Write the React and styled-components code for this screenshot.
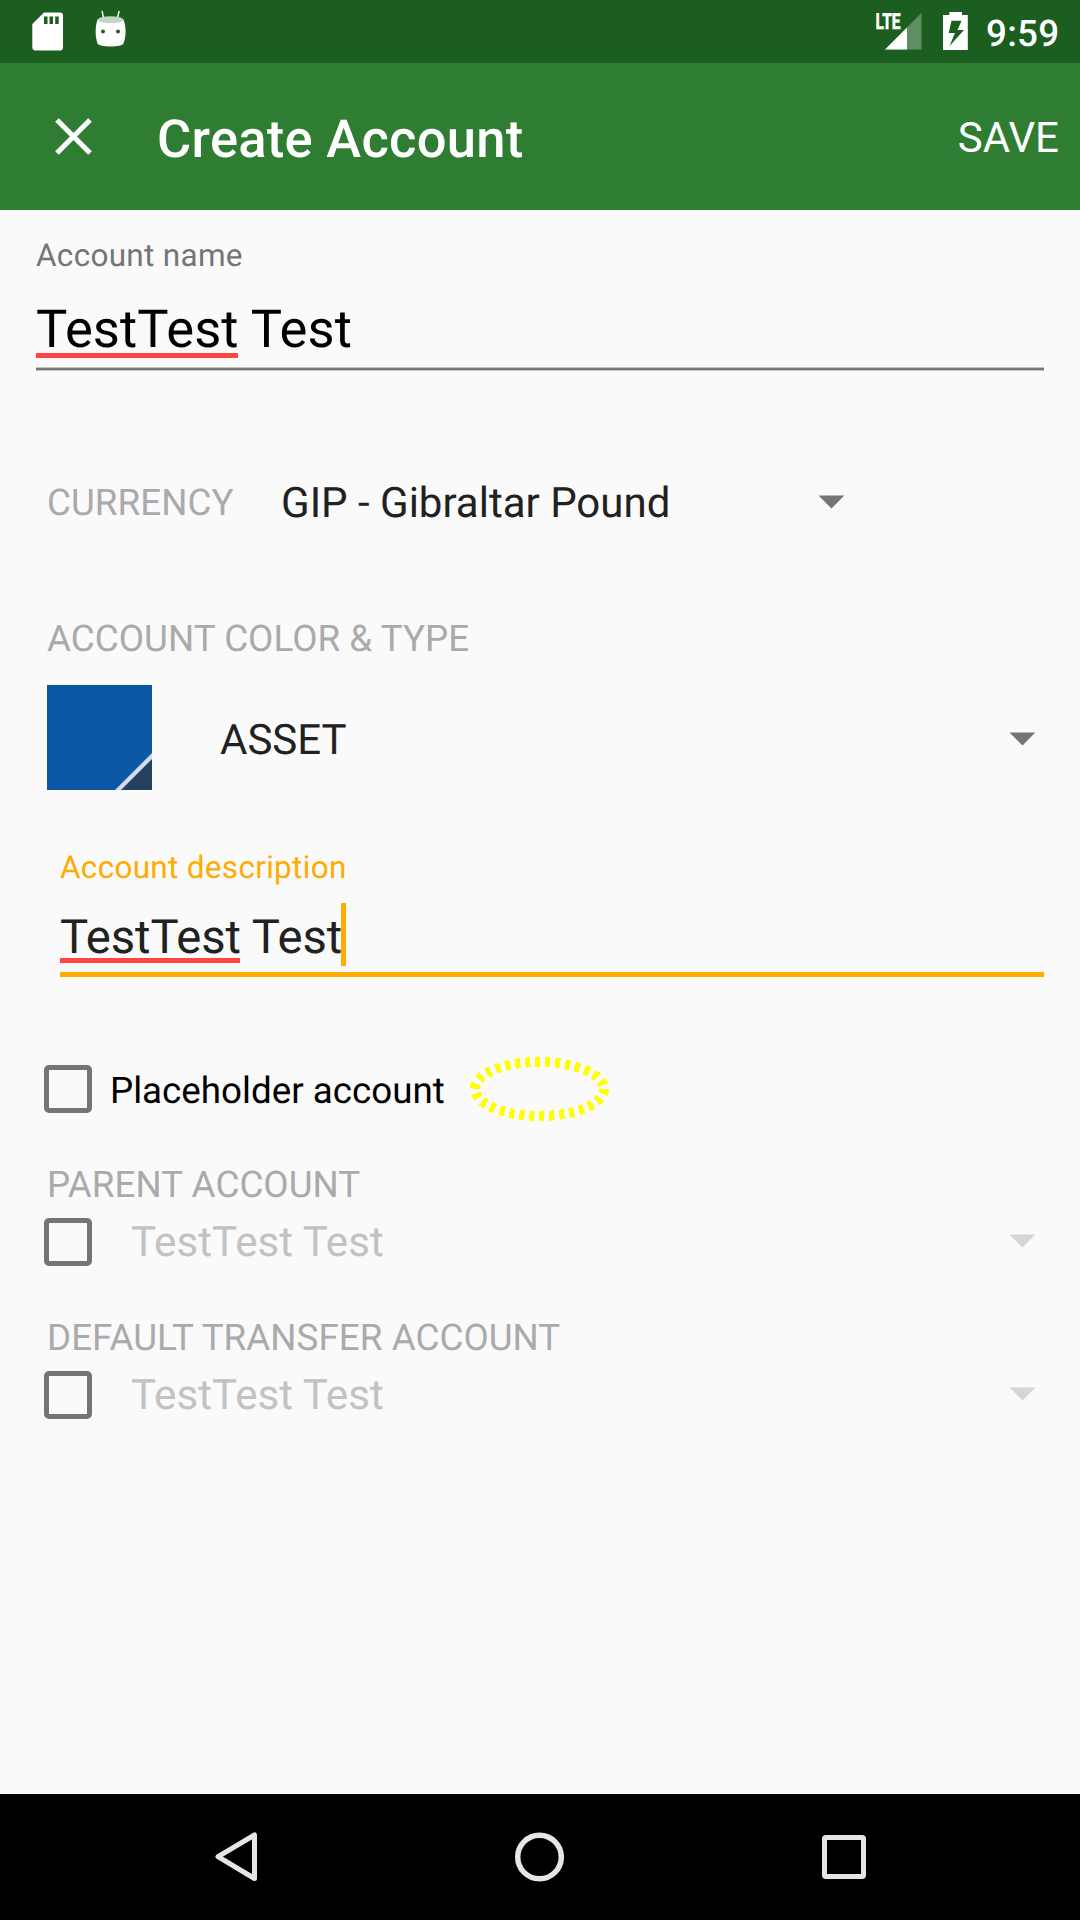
import React from "react";
import styled, { createGlobalStyle } from "styled-components";

const GlobalStyle = createGlobalStyle`
  * { box-sizing: border-box; }
  body { margin: 0; background: #fafafa; }
  svg { display: block; flex: none; }
`;

const Screen = styled.div`
  width: 1080px;
  height: 1920px;
  display: flex;
  flex-direction: column;
  background: #fafafa;
  color: #212121;
  font-family: Roboto, "Noto Sans", sans-serif;
  white-space: nowrap;
  overflow: hidden;
  text-rendering: geometricPrecision;
`;

const StatusBar = styled.header`
  height: 63px;
  flex: none;
  display: flex;
  justify-content: space-between;
  padding: 0 21px 0 32px;
  background: #1b5e20;
  color: #fff;
`;

const StatusGroup = styled.div`
  display: flex;
  gap: ${(p) => p.$gap}px;
`;

const Clock = styled.span`
  width: 73px;
  font-size: 36.75px;
  font-weight: 500;
  line-height: 43px;
  letter-spacing: 0.25px;
  padding-top: 12px;
`;

const Toolbar = styled.div`
  height: 147px;
  flex: none;
  display: flex;
  align-items: center;
  padding: 0 21px 0 55px;
  background: #2e7d32;
  color: #fff;
`;

const Title = styled.h1`
  flex: 1;
  margin: 0 0 0 65px;
  padding-top: 4px;
  font-size: 52.5px;
  font-weight: 500;
  line-height: 62px;
  letter-spacing: 0.27px;
`;

const SaveButton = styled.button`
  border: 0;
  padding: 2px 0 0;
  background: none;
  color: inherit;
  font: 400 42px/50px Roboto, sans-serif;
`;

const Form = styled.main`
  flex: 1;
  display: flex;
  flex-direction: column;
  padding: 27px 36px 0;
`;

const Field = styled.div`
  display: flex;
  flex-direction: column;
  margin: ${(p) => p.$margin || 0};
`;

const FloatingLabel = styled.label`
  font-size: 31.5px;
  line-height: 38px;
  letter-spacing: 0.3px;
  color: ${(p) => (p.$active ? "#ffab00" : "#757575")};
`;

const Value = styled.div`
  display: flex;
  height: ${(p) => p.$height}px;
  line-height: ${(p) => p.$line}px;
  padding-top: ${(p) => p.$top}px;
  font-size: ${(p) => p.$size}px;
  letter-spacing: ${(p) => p.$spacing}px;
  color: ${(p) => p.$color};
  border-bottom: ${(p) => p.$border};
  box-shadow: ${(p) => p.$edge || "none"};
  white-space: pre;
`;

const Misspelled = styled.span`
  position: relative;
  &::after {
    content: "";
    position: absolute;
    left: 0;
    right: 1px;
    top: ${(p) => p.$offset}px;
    height: 5px;
    background: #ff4444;
  }
`;

const Cursor = styled.span`
  width: 5px;
  height: 63px;
  margin: -6px 0 0 -1px;
  background: #ffab00;
`;

const Row = styled.div`
  position: relative;
  display: flex;
  align-items: center;
  height: ${(p) => p.$height}px;
  margin-top: ${(p) => p.$top}px;
  padding-left: ${(p) => p.$left || 0}px;
  padding-right: 8px;
`;

const SectionLabel = styled.div`
  font-size: 36.75px;
  line-height: 44px;
  letter-spacing: 0.05px;
  color: #aaaaaa;
  margin-top: ${(p) => p.$top || 0}px;
  margin-left: ${(p) => p.$left || 0}px;
  padding-top: ${(p) => p.$drop || 0}px;
`;

const SpinnerText = styled.span`
  flex: ${(p) => (p.$width ? "none" : 1)};
  width: ${(p) => (p.$width ? p.$width + "px" : "auto")};
  margin-left: ${(p) => p.$left}px;
  padding-top: ${(p) => p.$drop || 0}px;
  font-size: 42px;
  line-height: 50px;
  letter-spacing: ${(p) => (p.$disabled ? 0.08 : 0)}px;
  color: ${(p) => (p.$disabled ? "#c2c2c2" : "#212121")};
`;

const ArrowIcon = styled.svg`
  margin-top: ${(p) => p.$shift || 0}px;
`;

const Checkbox = styled.span`
  width: 48px;
  height: 48px;
  flex: none;
  border: 5.25px solid #757575;
  border-radius: 5px;
`;

const CheckLabel = styled.span`
  margin-left: 18px;
  padding-top: 4px;
  font-size: 36.75px;
  line-height: 44px;
  color: #000;
`;

const FocusRing = styled.svg`
  position: absolute;
  left: 424px;
  top: -10px;
`;

const NavBar = styled.nav`
  height: 126px;
  flex: none;
  background: #000;
  display: flex;
  align-items: center;
  justify-content: space-between;
  padding: 0 214px 0 214px;
`;

function Arrow({ disabled, shift }) {
  return (
    <ArrowIcon width="26" height="14" viewBox="0 0 26 14" $shift={shift}>
      <path d="M-.3 .6h25.600L12.500 13.600z" fill={disabled ? "#d6d6d6" : "#757575"} />
    </ArrowIcon>
  );
}

function AccountPicker({ title, top }) {
  return (
    <>
      <SectionLabel $top={top} $left={11}>{title}</SectionLabel>
      <Row $height={48} $top={11} $left={8}>
        <Checkbox />
        <SpinnerText $left={39} $disabled $drop={2}>TestTest Test</SpinnerText>
        <Arrow disabled shift={-2} />
      </Row>
    </>
  );
}

export default function App() {
  return (
    <Screen>
      <GlobalStyle />
      <StatusBar>
        <StatusGroup $gap={32}>
          <svg width="31" height="63" viewBox="0 0 31 63">
            <path
              fill="#fff"
              fillRule="evenodd"
              d="M12 12.5h16a3 3 0 0 1 3 3v32a3.2 3.2 0 0 1-3 3H3.500a3.200 3.200 0 0 1-3.200-3V24zM12 16.500v7.500h3.500v-7.500zM17.500 16.500v7.500h3.500v-7.500zM23.200 16.500v7.500h3.500v-7.500z"
            />
          </svg>
          <svg width="31" height="63" viewBox="0 0 31 63">
            <path d="M7.200 11.600l1.500 7M24 11.600l-1.700 7" stroke="#fff" strokeWidth="1.500" strokeLinecap="round" />
            <path
              fill="#fff"
              d="M2.500 19.500C0 27 0 36 2.500 43.500c1.500 4 24.500 4 26 0 2.800-7.500 2.800-16.500 0-24z"
            />
            <ellipse cx="15.500" cy="19.700" rx="12.800" ry="3.500" fill="#c3d5c4" />
            <circle cx="8" cy="31.500" r="2" fill="#1b5e20" />
            <circle cx="23" cy="31.500" r="2" fill="#1b5e20" />
          </svg>
        </StatusGroup>
        <StatusGroup $gap={0}>
          <svg width="110" height="63" viewBox="876 0 110 63" fill="#fff">
            <path d="M885 49.500L921.500 13v36.500z" fillOpacity=".3" />
            <path d="M885 49.500L907 27.500v22z" />
            <text
              x="875.500"
              y="29"
              fontFamily="Roboto, sans-serif"
              fontWeight="700"
              fontSize="22"
              textLength="25"
              lengthAdjust="spacingAndGlyphs"
              stroke="#fff"
              strokeWidth=".6"
            >
              LTE
            </text>
            <path
              fillRule="evenodd"
              d="M949.300 12h12.700v3h5.800v35h-24.800V15h6.300zM951.500 20.800l-2.800 12.200h6.300l-5.500 13L964 30h-6.500l4-9.200z"
            />
          </svg>
          <Clock>9:59</Clock>
        </StatusGroup>
      </StatusBar>

      <Toolbar>
        <svg width="37" height="37" viewBox="0 0 37 37">
          <path d="M2 2l33 33M35 2L2 35" stroke="#fff" strokeWidth="5.200" />
        </svg>
        <Title>Create Account</Title>
        <SaveButton>SAVE</SaveButton>
      </Toolbar>

      <Form>
        <Field>
          <FloatingLabel>Account name</FloatingLabel>
          <Value
            $height={95}
            $line={62}
            $top={23}
            $size={52.5}
            $spacing={0.1}
            $color="#000"
            $border="2px solid #757575"
            $edge="0 1px 0 #c4c4c4, inset 0 -1px 0 #c4c4c4"
          >
            <Misspelled $offset={55}>TestTest</Misspelled> Test
          </Value>
        </Field>

        <Row $height={60} $top={102} $left={11}>
          <SectionLabel $drop={2}>CURRENCY</SectionLabel>
          <SpinnerText $left={47.5} $width={537.5} $drop={3}>GIP - Gibraltar Pound</SpinnerText>
          <Arrow />
        </Row>

        <SectionLabel $top={85} $left={11}>ACCOUNT COLOR &amp; TYPE</SectionLabel>
        <Row $height={105} $top={24} $left={11}>
          <svg width="105" height="105" viewBox="0 0 105 105">
            <path d="M0 0h105v105H0z" fill="#0b57a4" />
            <path d="M68 105L105 68v37z" fill="#cedded" />
            <path d="M74 105L105 74v31z" fill="#23405e" />
          </svg>
          <SpinnerText $left={68} $drop={6}>ASSET</SpinnerText>
          <Arrow shift={2} />
        </Row>

        <Field $margin="59px 0 0 24px">
          <FloatingLabel $active>Account description</FloatingLabel>
          <Value
            $height={90}
            $line={56}
            $top={22}
            $size={47.25}
            $spacing={-0.08}
            $color="#212121"
            $border="5px solid #ffab00"
          >
            <Misspelled $offset={49}>TestTest</Misspelled> Test<Cursor />
          </Value>
        </Field>

        <Row $height={48} $top={88} $left={8}>
          <Checkbox />
          <CheckLabel>Placeholder account</CheckLabel>
          <FocusRing width="160" height="68" viewBox="460 1055 160 68" shapeRendering="crispEdges">
            <ellipse
              cx="539.500"
              cy="1089"
              rx="64.500"
              ry="27"
              fill="none"
              stroke="#ffff00"
              strokeWidth="10"
              strokeDasharray="5 5"
            />
          </FocusRing>
        </Row>

        <AccountPicker title="PARENT ACCOUNT" top={50} />
        <AccountPicker title="DEFAULT TRANSFER ACCOUNT" top={50} />
      </Form>

      <NavBar>
        <svg width="43" height="52" viewBox="0 0 43 52">
          <path
            d="M40.500 4v43.500L4 25.700z"
            fill="none"
            stroke="#e6e6e6"
            strokeWidth="5"
            strokeLinejoin="round"
          />
        </svg>
        <svg width="50" height="50" viewBox="0 0 50 50">
          <circle cx="25.500" cy="25" r="21.800" fill="none" stroke="#e6e6e6" strokeWidth="5.500" />
        </svg>
        <svg width="45" height="45" viewBox="0 0 45 45">
          <rect x="3.500" y="2.500" width="39" height="39" rx="1.500" fill="none" stroke="#e6e6e6" strokeWidth="5" />
        </svg>
      </NavBar>
    </Screen>
  );
}
